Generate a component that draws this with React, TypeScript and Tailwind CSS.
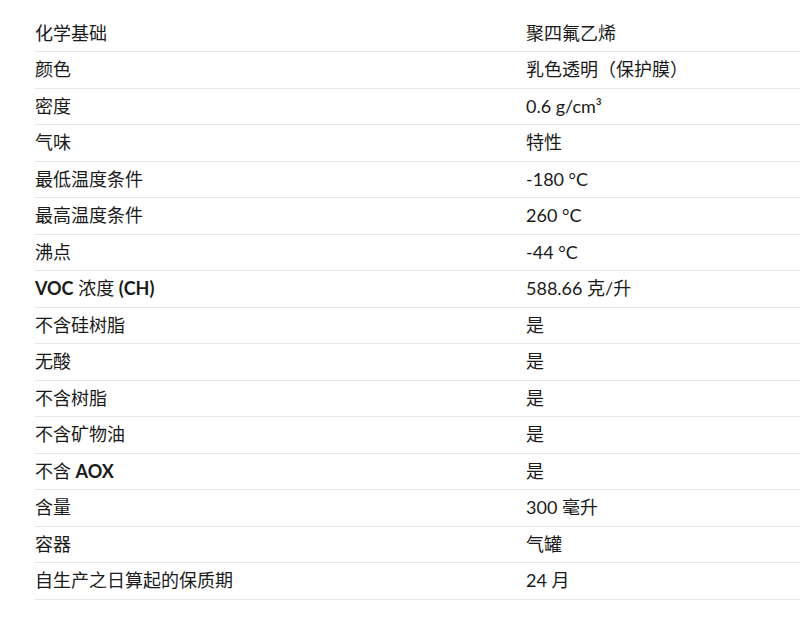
const rows: [React.ReactNode, string][] = [
  ['化学基础', '聚四氟乙烯'],
  ['颜色', '乳色透明（保护膜）'],
  ['密度', '0.6 g/cm³'],
  ['气味', '特性'],
  ['最低温度条件', '-180 °C'],
  ['最高温度条件', '260 °C'],
  ['沸点', '-44 °C'],
  [<><span className="font-bold">VOC</span> 浓度 <span className="font-bold">(CH)</span></>, '588.66 克/升'],
  ['不含硅树脂', '是'],
  ['无酸', '是'],
  ['不含树脂', '是'],
  ['不含矿物油', '是'],
  [<>不含 <span className="font-bold">AOX</span></>, '是'],
  ['含量', '300 毫升'],
  ['容器', '气罐'],
  ['自生产之日算起的保质期', '24 月'],
];

export default function App() {
  return (
    <div className="min-h-[617px] bg-white pl-[35px] pt-[15px] text-[#1a1a1a] [font-family:Lato,'Noto_Sans_CJK_SC',sans-serif]">
      <table className="w-full border-collapse text-[18px]">
        <tbody>
          {rows.map(([label, value], i) => (
            <tr key={i} className="h-[36.5px] border-b border-[#e6e6e6]">
              <td className="w-[491px] p-0 align-middle">{label}</td>
              <td className="p-0 align-middle">{value}</td>
            </tr>
          ))}
        </tbody>
      </table>
    </div>
  );
}
